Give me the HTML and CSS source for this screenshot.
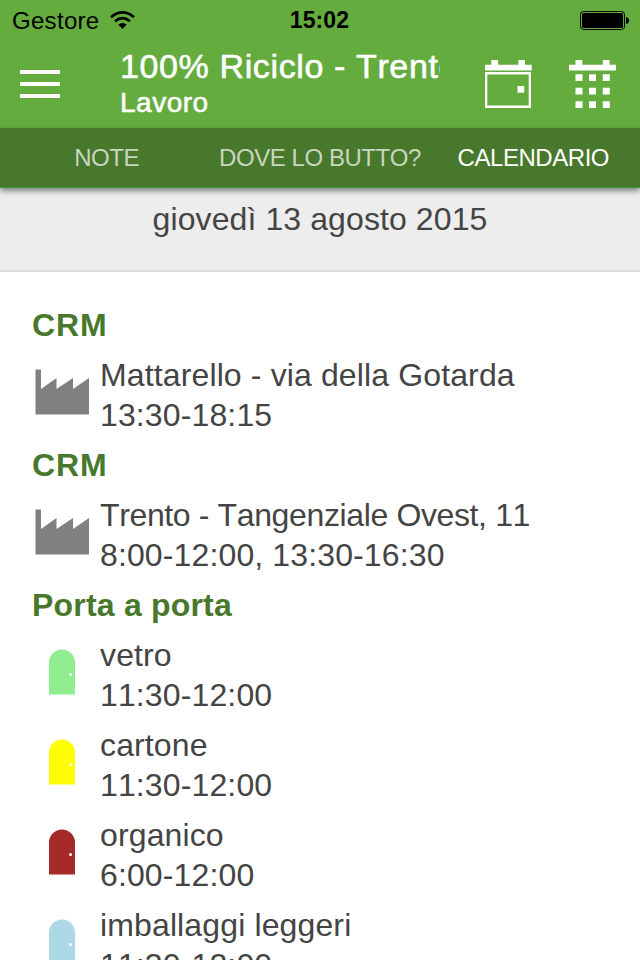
FILE: index.html
```html
<!DOCTYPE html>
<html lang="it">
<head>
<meta charset="utf-8">
<title>100% Riciclo - Trento</title>
<link rel="stylesheet" href="styles.css">
</head>
<body>
<div class="status">
  <div class="carrier"><span>Gestore</span>
    <svg class="wifi" width="25" height="18" viewBox="0 0 25 18"><g fill="none" stroke="#000" stroke-width="2.7"><path d="M1 6.2q11.5-9.5 23 0"/><path d="M5 10.2q7.5-6.2 15 0"/></g><path d="M8.3 13.6q4.2-3.4 8.4 0L12.5 18z"/></svg>
  </div>
  <div class="clock">15:02</div>
  <svg class="battery" width="49" height="19" viewBox="0 0 49 19"><rect x=".5" y=".5" width="44" height="18" rx="3" fill="none" stroke="#000"/><rect x="2" y="2" width="41" height="15" rx="1.5"/><path d="M46 6q3 .5 3 3.5t-3 3.5z"/></svg>
</div>
<header class="header">
  <svg class="menu" width="40" height="28" viewBox="0 0 40 28" fill="#fff"><path d="M0 0h40v4H0zM0 12h40v4H0zM0 24h40v4H0z"/></svg>
  <div class="titles"><h1>100% Riciclo - Trento</h1><h2>Lavoro</h2></div>
  <svg class="action day" width="47" height="48" viewBox="0 0 47 48" fill="#fff"><path d="M0 4.7h6.3V0h6.8v4.7h20.2V0H40v4.7h6.7v5.8H0z"/><path fill-rule="evenodd" d="M0 12h46v36H0zM2.3 14.5v31h41.4v-31z"/><path d="M32.5 26h6.7v6.7h-6.7z"/></svg>
  <svg class="action" width="47" height="48" viewBox="0 0 47 48" fill="#fff"><path d="M0 4.7h6.5V0h6.8v4.7h20.5V0h6.7v4.7H47v5.8H0z"/><path d="M6.5 14.3h7V21h-7zM20 14.3h7V21h-7zM33.8 14.3h7V21h-7zM6.5 27.8h7v6.7h-7zM20 27.8h7v6.7h-7zM33.8 27.8h7v6.7h-7zM6.5 41.3h7V48h-7zM20 41.3h7V48h-7zM33.8 41.3h7V48h-7z"/></svg>
</header>
<nav class="tabs"><span>NOTE</span><span>DOVE LO BUTTO?</span><span class="active">CALENDARIO</span></nav>
<div class="date">giovedì 13 agosto 2015</div>
<main class="list">
  <h3 class="crm">CRM</h3>
  <div class="row"><svg class="icon" viewBox="0 0 60 80"><path fill="#808080" d="M3.5 13.5H9V33l15.5-11v11L41 22v11l16-11v36.5H3.5z"/></svg><p><span>Mattarello - via della Gotarda</span><br>13:30-18:15</p></div>
  <h3 class="crm">CRM</h3>
  <div class="row"><svg class="icon" viewBox="0 0 60 80"><path fill="#808080" d="M3.5 13.5H9V33l15.5-11v11L41 22v11l16-11v36.5H3.5z"/></svg><p><span class="tight">Trento - Tangenziale Ovest, 11</span><br>8:00-12:00, 13:30-16:30</p></div>
  <h3>Porta a porta</h3>
  <div class="row glass"><svg class="icon" viewBox="0 0 60 80"><path d="M17 58.5V26.5a13 13 0 0 1 26 0v32z"/><circle cx="38.5" cy="38.5" r="1.5" fill="#fff"/></svg><p>vetro<br>11:30-12:00</p></div>
  <div class="row card"><svg class="icon" viewBox="0 0 60 80"><path d="M17 58.5V26.5a13 13 0 0 1 26 0v32z"/><circle cx="38.5" cy="38.5" r="1.5" fill="#fff"/></svg><p>cartone<br>11:30-12:00</p></div>
  <div class="row organic"><svg class="icon" viewBox="0 0 60 80"><path d="M17 58.5V26.5a13 13 0 0 1 26 0v32z"/><circle cx="38.5" cy="38.5" r="1.5" fill="#fff"/></svg><p>organico<br>6:00-12:00</p></div>
  <div class="row light"><svg class="icon" viewBox="0 0 60 80"><path d="M17 58.5V26.5a13 13 0 0 1 26 0v32z"/><circle cx="38.5" cy="38.5" r="1.5" fill="#fff"/></svg><p>imballaggi leggeri<br>11:30-12:00</p></div>
</main>
</body>
</html>
```
FILE: styles.css
```css
* { box-sizing: border-box; margin: 0; padding: 0; }
html { height: 100%; overflow: hidden; }
body {
  height: 960px;
  overflow: hidden;
  display: flex;
  flex-direction: column;
  background: #fff;
  color: #444;
  font-family: "Liberation Sans", sans-serif;
  font-kerning: none;
}
svg { display: block; flex: none; }
.status {
  height: 40px;
  flex: none;
  display: grid;
  grid-template-columns: 1fr auto 1fr;
  align-items: center;
  padding: 1px 11px 0 12px;
  background: #64ac3e;
  color: #000;
  font-size: 24px;
  line-height: 39px;
}
.carrier { display: flex; align-items: center; gap: 11px; letter-spacing: .3px; }
.wifi { margin-bottom: 1px; }
.clock { font-weight: bold; font-size: 23px; letter-spacing: .1px; position: relative; left: -1px; }
.battery { justify-self: end; }
.header {
  height: 88px;
  flex: none;
  display: flex;
  align-items: flex-start;
  background: #64ac3e;
  color: #fff;
}
.menu { margin: 30px 60px 0 20px; }
.titles { width: 320px; overflow: hidden; white-space: nowrap; padding-top: 6px; }
h1 { font-size: 34px; line-height: 40px; font-weight: normal; letter-spacing: .62px; -webkit-text-stroke: .6px #fff; }
h2 { font-size: 28px; line-height: 34px; font-weight: normal; letter-spacing: .5px; -webkit-text-stroke: .6px #fff; }
.action { margin-top: 20px; }
.day { margin-left: 45px; margin-right: 37px; }
.tabs {
  height: 60px;
  flex: none;
  display: grid;
  grid-template-columns: repeat(3, 1fr);
  text-align: center;
  white-space: nowrap;
  line-height: 60px;
  font-size: 24px;
  letter-spacing: -.45px;
  color: #c8d5bf;
  background: #48782c;
  border-bottom: 1px solid #35994b;
  box-shadow: 0 3px 6px rgba(0, 0, 0, .45);
  position: relative;
}
.active { color: #fff; }
.date {
  height: 84px;
  flex: none;
  padding-top: 11px;
  text-align: center;
  font-size: 32px;
  line-height: 40px;
  letter-spacing: .1px;
  background: #ededed;
  border-bottom: 2px solid #dcdcdc;
}
.list { padding: 33px 32px 0; font-size: 32px; line-height: 40px; white-space: nowrap; }
h3 { height: 50px; color: #48782c; font-size: 32px; line-height: 40px; letter-spacing: .2px; }
.crm { letter-spacing: .9px; }
.row { height: 90px; display: flex; gap: 8px; }
.icon { width: 60px; height: 80px; margin-top: 1px; }
.glass { fill: #90ee90; }
.card { fill: #ff0; }
.organic { fill: #a52a2a; }
.light { fill: #add8e6; }
.row p { color: #444; letter-spacing: .13px; }
.tight { letter-spacing: -.37px; }
```
